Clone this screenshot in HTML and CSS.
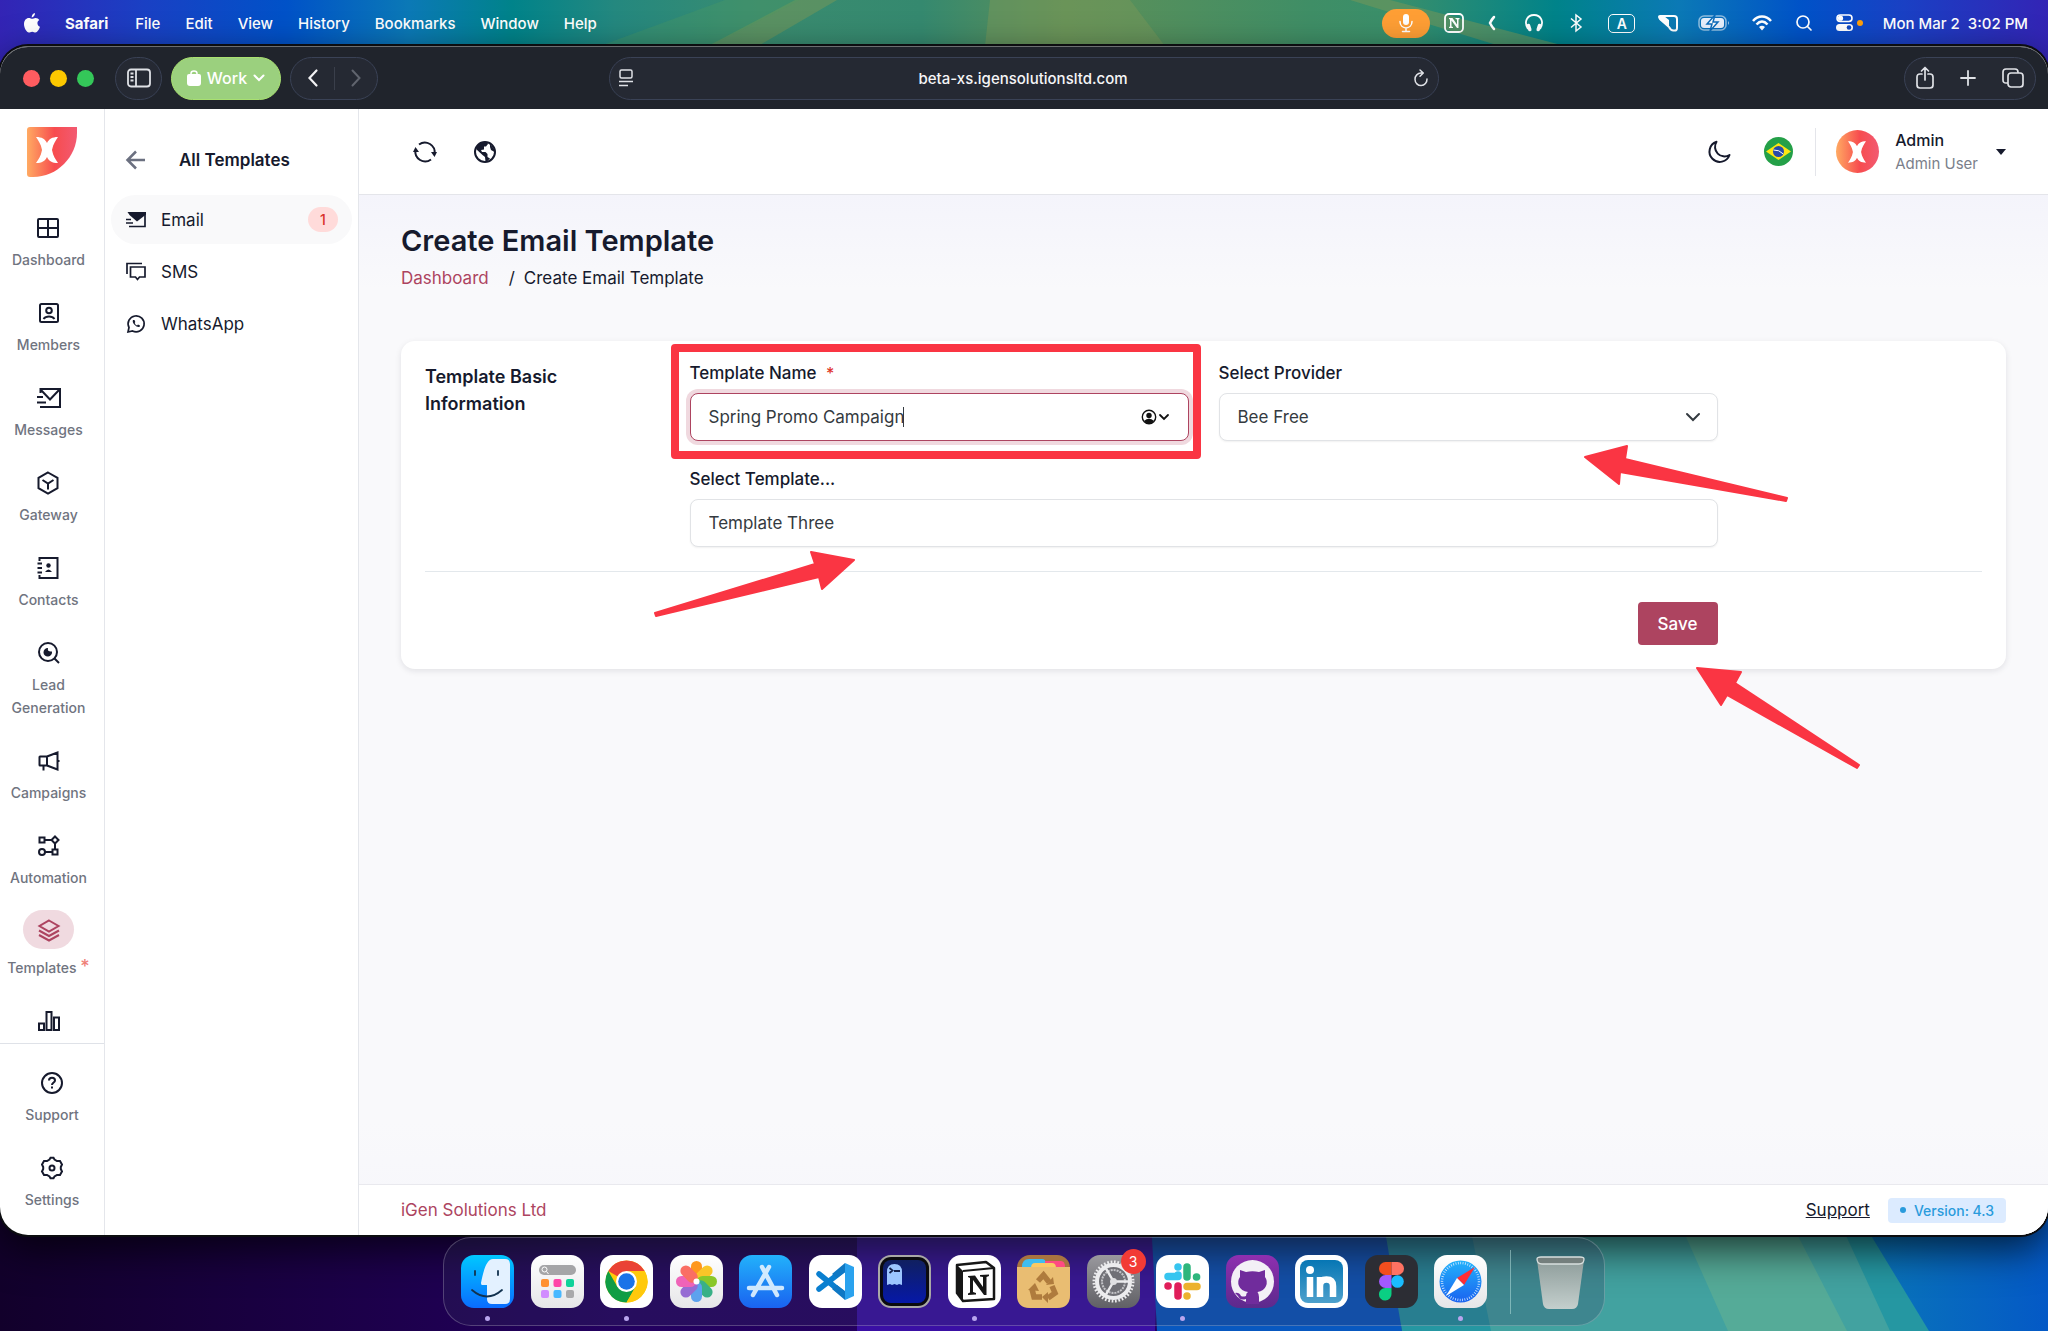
FILE: index.html
```html
<!DOCTYPE html>
<html lang="en">
<head>
    <meta charset="UTF-8">
    <meta name="viewport" content="width=device-width, initial-scale=1.0">
    <title>Create Email Template</title>
    <link rel="stylesheet" href="styles.css">
</head>
<body>
    <!-- shared gradients and the brand mark -->
    <svg class="defs" aria-hidden="true">
        <defs>
            <linearGradient id="brand" x1="0" y1="0" x2="1" y2="0">
                <stop offset="0" stop-color="#ffaa62"/>
                <stop offset=".55" stop-color="#f74c4f"/>
                <stop offset="1" stop-color="#f25a72"/>
            </linearGradient>
            <linearGradient id="silver" x1="0" y1="0" x2="0" y2="1">
                <stop offset="0" stop-color="#ffffff"/>
                <stop offset="1" stop-color="#e6e6e8"/>
            </linearGradient>
            <linearGradient id="night" x1="0" y1="0" x2="1" y2="0">
                <stop offset="0" stop-color="#12002b"/>
                <stop offset=".3" stop-color="#23005f"/>
                <stop offset=".6" stop-color="#250060"/>
                <stop offset="1" stop-color="#3a0ca0"/>
            </linearGradient>
            <linearGradient id="ocean" x1="0" y1="0" x2="1" y2="0">
                <stop offset="0" stop-color="#0a78b8"/>
                <stop offset="1" stop-color="#0459c6"/>
            </linearGradient>
            <symbol id="xmark" viewBox="0 0 22 26">
                <path d="M0 0C6 0 9 2 11 6C13 2 16 0 22 0C20 3 17 7 16 13C17 19 20 23 22 26C16 26 13 24 11 20C9 24 6 26 0 26C2 23 5 19 6 13C5 7 2 3 0 0Z" fill="#fff"/>
            </symbol>
        </defs>
    </svg>

    <svg class="wallpaper-top" viewBox="0 0 2048 90" preserveAspectRatio="none" aria-hidden="true">
        <g fill="#75975a" opacity=".55">
            <path d="M795 0H837L758 46H708Z"/>
            <path d="M990 0H1130L1165 46H985Z"/>
            <path d="M1350 0H1390L1565 46H1500Z"/>
        </g>
        <path d="M725 0H800L710 46H600Z" fill="#4f9a60" opacity=".3"/>
    </svg>
    <svg class="wallpaper-bottom" viewBox="0 0 2048 130" preserveAspectRatio="none" aria-hidden="true">
        <rect width="2048" height="130" fill="url(#night)"/>
        <path d="M857 0H1160L1155 130H857Z" fill="#3a0fa4"/>
        <path d="M1150 0H1390L1402 130H1157Z" fill="#0858c0"/>
        <path d="M1380 0H1860L1930 130H1402Z" fill="#2597a2"/>
        <path d="M1465 0H1830L1890 130H1491Z" fill="#42a2a0"/>
        <path d="M1670 0H1780L1847 130H1728Z" fill="#55ab98"/>
        <path d="M1850 0H2048V130H1929Z" fill="url(#ocean)"/>
    </svg>

    <header class="menubar">
        <nav class="menus">
            <svg class="apple" viewBox="0 0 16 20"><path fill="#fff" d="M11 0C11 2.500 9.500 4.300 7.700 4.500C7.500 2.300 9 .5 11 0ZM8.200 5.800C9 5.800 10 4.900 11.600 4.900C13.200 4.900 14.500 5.700 15.300 6.900C12.500 8.500 13 12.600 16 13.800C15.200 16.400 13.300 19.500 11.500 19.500C10.200 19.500 9.800 18.700 8.200 18.700C6.600 18.700 6.100 19.500 4.900 19.500C2.700 19.500 0 14.900 0 11C0 7.200 2.400 5 4.700 5C6.200 5 7.400 5.800 8.200 5.800Z"/></svg>
            <b>Safari</b><span>File</span><span>Edit</span><span>View</span><span>History</span><span>Bookmarks</span><span>Window</span><span>Help</span>
        </nav>
        <div class="status">
            <span class="mic"><svg width="16" height="20" viewBox="0 0 16 20" fill="none" stroke="#fff" stroke-width="1.500" stroke-linecap="round"><rect x="5" y="1" width="6" height="11" rx="3" fill="#fff" stroke="none"/><path d="M2 8.500C2 17 14 17 14 8.500M8 15V18.500M4.500 18.500H11.500"/></svg></span>
            <svg width="20" height="20" viewBox="0 0 20 20"><rect x="1" y="1" width="18" height="18" rx="4" fill="none" stroke="#fff" stroke-width="1.800"/><path d="M5 5H8.500L13 11.500V6.500L11.500 6V5H15.500V6L14.500 6.500V15H13L7.500 7.500V13.500L9 14V15H5V14L6 13.500V6.500L5 6Z" fill="#fff"/></svg>
            <svg width="16" height="20" viewBox="0 0 16 20" fill="none" stroke="#fff" stroke-width="2.500" stroke-linecap="round"><path d="M10 4Q8 6 6 10Q8 14 10 16"/></svg>
            <svg width="28" height="20" viewBox="0 0 28 20" fill="none" stroke="#fff" stroke-width="1.800"><path d="M8 16C3.500 9 7 2 14 2S24.500 9 20 16"/><path d="M8.500 12.500L9.800 16.500M19.500 12.500L18.200 16.500" stroke-width="3.500" stroke-linecap="round"/></svg>
            <svg width="16" height="20" viewBox="0 0 16 20" fill="none" stroke="#fff" stroke-width="1.500"><path d="M3 5.500L13 14L8 18V2L13 6L3 14.500"/></svg>
            <span class="input-source"><span>A</span></span>
            <svg width="16" height="20" viewBox="0 0 16 20"><path d="M0 3H14Q17 3 17 6V15Q17 18 14 17.500Q11 18 9 14L0 6Q-2 3 0 3Z" fill="none" stroke="#fff" stroke-width="2"/><path d="M-1 3H4L9 7V14L0 7Z" fill="#fff"/></svg>
            <svg width="36" height="20" viewBox="0 0 36 20"><rect x="3" y="3" width="27" height="14" rx="5" fill="none" stroke="#fff" stroke-opacity=".55" stroke-width="1.500"/><rect x="5" y="5" width="23" height="10" rx="3" fill="#e8f0fc"/><path d="M32 8Q34 10 32 12Z" fill="#fff" fill-opacity=".6"/><path d="M19 2L11 11H16L14 18L22 9H17Z" fill="#fff" stroke="#0b6cbc" stroke-width="1.500"/></svg>
            <svg width="20" height="20" viewBox="0 0 20 20" fill="none" stroke="#fff" stroke-width="2.500"><path d="M1 8C6 2 14 2 19 8M4.500 11.500C8 7.500 12 7.500 15.500 11.500"/><path d="M10 17.500L7 14Q10 11.500 13 14Z" fill="#fff" stroke="none"/></svg>
            <svg width="24" height="20" viewBox="0 0 24 20" fill="none" stroke="#fff" stroke-width="1.700" stroke-linecap="round"><circle cx="11" cy="9" r="6"/><path d="M15.500 13.500L19 17"/></svg>
            <svg width="27" height="20" viewBox="0 0 27 20"><rect x="1" y="2" width="15" height="6.500" rx="3.200" fill="none" stroke="#fff" stroke-width="1.600"/><circle cx="4.500" cy="5.200" r="2.600" fill="#fff"/><rect x="0" y="11" width="17" height="7" rx="3.500" fill="#fff"/><circle cx="13" cy="14.500" r="2.300" fill="#1048c0"/><circle cx="24" cy="10" r="3" fill="#ff9f0a"/></svg>
            <time>Mon Mar 2&nbsp; 3:02 PM</time>
        </div>
    </header>

    <div class="window">
        <div class="toolbar">
            <div class="toolbar-left">
                <div class="lights"><i class="close"></i><i class="minimize"></i><i class="zoom"></i></div>
                <button class="pill side-toggle" aria-label="Show sidebar"><svg width="24" height="20" viewBox="0 0 24 20" fill="none" stroke="#dfe1e6" stroke-width="1.800"><rect x="1" y="1.500" width="22" height="17" rx="3"/><path d="M9 1.500V18.500M3.500 5.500H6.500M3.500 9H6.500M3.500 12.500H6.500"/></svg></button>
                <button class="profile"><svg width="14" height="16" viewBox="0 0 14 16"><path d="M0 6Q0 4 2 4H12Q14 4 14 6V13Q14 16 11 16H3Q0 16 0 13Z" fill="#fff"/><path d="M4 5V3.500Q4 1 7 1T10 3.500V5" fill="none" stroke="#fff" stroke-width="1.500"/></svg>Work<svg width="12" height="8" viewBox="0 0 12 8" fill="none" stroke="#fff" stroke-width="2" stroke-linecap="round"><path d="M1.500 1.500L6 6L10.500 1.500"/></svg></button>
                <div class="pill history">
                    <button aria-label="Back"><svg width="10" height="18" viewBox="0 0 10 18" fill="none" stroke="#f2f2f4" stroke-width="2.200" stroke-linecap="round"><path d="M8.500 1.500L1.500 9L8.500 16.500"/></svg></button>
                    <i></i>
                    <button aria-label="Forward"><svg width="10" height="18" viewBox="0 0 10 18" fill="none" stroke="#60646e" stroke-width="2" stroke-linecap="round"><path d="M1.500 1.500L8.500 9L1.500 16.500"/></svg></button>
                </div>
            </div>
            <div class="pill address">
                <svg width="14" height="18" viewBox="0 0 14 18" fill="none" stroke="#dfe1e6" stroke-width="1.500"><rect x="1" y="1" width="12" height="8" rx="1.500"/><path d="M0 12.500H14M0 16.500H9"/></svg>
                <input type="text" value="beta-xs.igensolutionsltd.com" aria-label="Address">
                <svg width="16" height="18" viewBox="0 0 16 18" fill="none" stroke="#dfe1e6" stroke-width="1.500" stroke-linecap="round" stroke-linejoin="round"><path d="M9.500 4H8A6 6.300 0 1 0 14 10M7 1L10.300 4L7 7.200"/></svg>
            </div>
            <div class="pill actions">
                <svg width="18" height="24" viewBox="0 0 18 24" fill="none" stroke="#dfe1e6" stroke-width="1.700" stroke-linecap="round" stroke-linejoin="round"><path d="M6 8H4Q1 8 1 11V19Q1 22 4 22H14Q17 22 17 19V11Q17 8 14 8H12M9 14V1.500M5.500 5L9 1.500L12.500 5"/></svg>
                <svg width="16" height="24" viewBox="0 0 16 24" stroke="#dfe1e6" stroke-width="1.800" stroke-linecap="round"><path d="M1 12H15M8 5V19"/></svg>
                <svg width="22" height="24" viewBox="0 0 22 24" fill="none" stroke="#dfe1e6" stroke-width="1.700"><rect x="6" y="7" width="15" height="14" rx="3"/><path d="M6 17H4Q1 17 1 14V6Q1 3 4 3H13Q16 3 16 6V7"/></svg>
            </div>
        </div>

        <div class="app">
            <aside class="rail">
                <a class="logo" href="#" aria-label="Home"><svg width="50" height="50" viewBox="0 0 50 50"><path d="M3 0H50V6C50 30 30 50 6 50H3Q0 50 0 47V3Q0 0 3 0Z" fill="url(#brand)"/><use href="#xmark" x="9" y="10" width="22" height="26"/></svg></a>
                <nav class="rail-nav">
                    <a href="#"><svg viewBox="0 0 24 24"><rect x="2" y="3" width="20" height="18" rx="1"/><path d="M12 3V21M2 12H22"/></svg>Dashboard</a>
                    <a href="#"><svg viewBox="0 0 24 24"><rect x="3" y="3" width="18" height="18" rx="1.500"/><circle cx="12" cy="9.500" r="2.800"/><path d="M6.500 18C9 14.800 15 14.800 17.500 18"/></svg>Members</a>
                    <a href="#"><svg viewBox="0 0 24 24"><path d="M3.500 7V3H23V21H3M3.500 3.500L13 13.500L22.500 3.500M0 11H6M0 16.500H9"/></svg>Messages</a>
                    <a href="#"><svg viewBox="0 0 24 24"><path d="M12 1.500L21.500 6.800V17.200L12 22.500L2.500 17.200V6.800ZM6.500 9L12 12.500L17.500 9M12 12.500V18.500"/></svg>Gateway</a>
                    <a href="#"><svg viewBox="0 0 24 24"><path d="M3.500 5V2H21.500V22H3.500V19M1.500 7.500H6M1.500 12H6M1.500 16.500H6"/><circle cx="12.500" cy="9.500" r="2.200" class="solid"/><path class="solid" d="M9 16Q12.500 11 16 16Z"/></svg>Contacts</a>
                    <a href="#"><svg viewBox="0 0 24 24"><circle cx="11" cy="11" r="9"/><path d="M17 17L22 22"/><path class="solid" d="M11 7Q10 11 15 10.500A4.300 4.300 0 1 1 11 7Z"/></svg>Lead<br>Generation</a>
                    <a href="#"><svg viewBox="0 0 24 24"><path d="M3 7.500H10V16.500H3Q2.500 16.500 2.500 16V8Q2.500 7.500 3 7.500ZM10 7.500L20.500 3.500V20.500L10 16.500M6.500 16.500V21.500M20.500 12H22.500"/></svg>Campaigns</a>
                    <a href="#"><svg viewBox="0 0 24 24"><rect x="2.500" y="3.500" width="5" height="5"/><circle cx="5" cy="18" r="3"/><rect x="15.500" y="15.500" width="5" height="5"/><path d="M18 2.500L21.500 6L18 9.500L14.500 6ZM7.500 6H14.500M18 9.500V15.500M8 18H15.500"/></svg>Automation</a>
                    <a href="#" class="active"><span class="blob"><svg viewBox="0 0 24 24"><path d="M12 2.500L21.500 8L12 13.500L2.500 8ZM2 12.500L12 18L22 12.500M2 17L12 22.500L22 17"/></svg></span><span>Templates <sup>*</sup></span></a>
                    <a href="#" aria-label="Reports"><svg viewBox="0 0 24 24"><path d="M2 14.500H7V21H2ZM9.500 3H14.500V21H9.500ZM17 8.500H22V21H17Z"/></svg></a>
                </nav>
                <nav class="rail-foot">
                    <a href="#"><svg viewBox="0 0 24 24"><circle cx="12" cy="12" r="10"/><path d="M9 9.500C9 5.800 15 5.800 15 9.500C15 11.500 12 11.500 12 14M12 15.500V17.500"/></svg>Support</a>
                    <a href="#"><svg viewBox="0 0 24 24"><path d="M9.500 3.500L10.500 1.800H13.500L14.500 3.500L17 5H20L22 8.500L20.800 11V13L22 15.500L20 19H17L14.500 20.500L13.500 22.200H10.500L9.500 20.500L7 19H4L2 15.500L3.200 13V11L2 8.500L4 5H7Z"/><circle cx="12" cy="12" r="2.500"/></svg>Settings</a>
                </nav>
            </aside>

            <aside class="submenu">
                <div class="submenu-head">
                    <button aria-label="Back"><svg width="20" height="20" viewBox="0 0 20 20" fill="none" stroke="#6b7080" stroke-width="2.500"><path d="M19 10H2M10 1.500L1.500 10L10 18.500"/></svg></button>
                    <h2>All Templates</h2>
                </div>
                <nav>
                    <a href="#" class="current"><svg viewBox="0 0 20 20" fill="none" stroke="#161a2d" stroke-width="1.700"><path d="M19 4V16.500H3M0 9.500H5M0 13H7"/><path d="M1.500 2H20V4.500L11 11.500L3.500 5Z" fill="#161a2d" stroke="none"/></svg><span>Email</span><em>1</em></a>
                    <a href="#"><svg viewBox="0 0 20 20" fill="none" stroke="#161a2d" stroke-width="1.700"><path d="M1 12V1.500H16"/><path d="M4.500 5H19V15H13.500L11.500 17.500L9.500 15H4.500Z"/></svg><span>SMS</span></a>
                    <a href="#"><svg viewBox="0 0 20 20" fill="none" stroke="#161a2d" stroke-width="1.700"><path d="M2 18L3 13.500A8 8 0 1 1 6.500 17Z"/><path d="M7 6Q6 8 8.500 10.800T13.500 13L14 11.500L12 10.500L11 11.500Q9.500 11 8.700 9L9.300 8L8.500 6Z" fill="#161a2d" stroke="none"/></svg><span>WhatsApp</span></a>
                </nav>
            </aside>

            <main class="main">
                <header class="topbar">
                    <button aria-label="Refresh"><svg width="24" height="24" viewBox="0 0 24 24" fill="none" stroke="#161a2d" stroke-width="2"><path d="M6 4.500A9.800 9.800 0 0 1 21.500 14M18 19.500A9.800 9.800 0 0 1 2.500 10"/><path d="M18 12H24L21.500 17ZM0 12H6L2.500 7Z" fill="#161a2d" stroke="none"/></svg></button>
                    <button aria-label="Website"><svg width="24" height="24" viewBox="0 0 24 24"><circle cx="12" cy="12" r="10" fill="none" stroke="#161a2d" stroke-width="2"/><path d="M4 7Q7 1 14 2L15 4L13 6.500H11V9.500L8 10L9 12H12.500L14.500 14V17L17 18.500Q14 22 12.500 21.500L12 17L9.500 15L3 9ZM17 4L21.500 9.500V12L18 10L17 7Z" fill="#161a2d"/></svg></button>
                    <span class="spacer"></span>
                    <button aria-label="Dark mode"><svg width="24" height="24" viewBox="0 0 24 24" fill="none" stroke="#161a2d" stroke-width="2" stroke-linejoin="round"><path d="M9.500 1.800A10.300 10.300 0 1 0 22.500 15A9.500 9.500 0 0 1 9.500 1.800Z"/></svg></button>
                    <button class="flag" aria-label="Language"><svg width="29" height="29" viewBox="0 0 29 29"><circle cx="14.500" cy="14.500" r="14.500" fill="#24a048"/><path d="M14.500 6L27 14.500L14.500 23L2 14.500Z" fill="#fee611"/><circle cx="14.500" cy="14.500" r="5.500" fill="#2a4ba8"/><path d="M9.500 13Q15 12.500 19.300 17" stroke="#fff" fill="none"/></svg></button>
                    <button class="account">
                        <svg width="43" height="43" viewBox="0 0 43 43"><circle cx="21.500" cy="21.500" r="21.500" fill="url(#brand)"/><use href="#xmark" x="12" y="11" width="18" height="22"/></svg>
                        <span class="who"><b>Admin</b><small>Admin User</small></span>
                        <i class="caret-down"></i>
                    </button>
                </header>

                <div class="content">
                    <h1>Create Email Template</h1>
                    <p class="crumbs"><a href="#">Dashboard</a><i>/</i><span>Create Email Template</span></p>

                    <form class="card">
                        <div class="card-grid">
                            <h3>Template Basic Information</h3>
                            <div class="fields">
                                <div class="field marked">
                                    <label for="name">Template Name <sup>*</sup></label>
                                    <div class="control">
                                        <input type="text" id="name" class="focused" value="Spring Promo Campaign">
                                        <i class="cursor"></i>
                                        <svg class="autofill" width="28" height="16" viewBox="0 0 28 16" fill="none" stroke="#111"><circle cx="8" cy="8" r="6.700" stroke-width="1.400"/><circle cx="8" cy="6.500" r="2.700" fill="#111" stroke="none"/><path d="M3 12Q8 7.500 13 12Q8 17 3 12Z" fill="#111" stroke="none"/><path d="M19 6L23 10L27 6" stroke-width="1.800" stroke-linecap="round"/></svg>
                                    </div>
                                </div>
                                <div class="field">
                                    <label for="provider">Select Provider</label>
                                    <div class="control">
                                        <select id="provider"><option>Bee Free</option></select>
                                        <svg class="arrow" width="14" height="8" viewBox="0 0 14 8" fill="none" stroke="#343a40" stroke-width="2" stroke-linecap="round"><path d="M1 1L7 7L13 1"/></svg>
                                    </div>
                                </div>
                                <div class="field wide">
                                    <label for="template">Select Template...</label>
                                    <select id="template"><option>Template Three</option></select>
                                </div>
                            </div>
                        </div>
                        <hr>
                        <div class="card-grid">
                            <div class="buttons"><button type="button" class="save">Save</button></div>
                        </div>

                        <!-- pointer arrows over the form -->
                        <svg class="pointer to-template" width="204" height="68" viewBox="0 0 204 68"><path d="M201 10L158 2L162 14L2 63L3 66L166 27L169 39Z"/></svg>
                        <svg class="pointer to-provider" width="206" height="58" viewBox="0 0 206 58"><path d="M3 13L45 2L43 15L205 54L204 57L38 28L37 40Z"/></svg>
                        <svg class="pointer to-save" width="166" height="104" viewBox="0 0 166 104"><path d="M2 2L46 6L40 17L164 99L162 102L32 29L26 39Z"/></svg>
                    </form>
                </div>

                <footer class="footer">
                    <a href="#" class="company">iGen Solutions Ltd</a>
                    <span class="spacer"></span>
                    <a href="#" class="support">Support</a>
                    <span class="version"><i></i>Version: 4.3</span>
                </footer>
            </main>
        </div>
    </div>

    <div class="dock-area">
        <div class="dock">
            <div class="dock-apps">
                <span class="app-icon running"><svg viewBox="0 0 53 53"><defs><linearGradient id="finder" x2="0" y2="1"><stop stop-color="#00c8ff"/><stop offset="1" stop-color="#0a6cff"/></linearGradient></defs><rect width="53" height="53" rx="13" fill="url(#finder)"/><path d="M32 4H44Q49 4 49 9V44Q49 49 44 49H31Q26 49 26 44V30H21Q20 30 20 28C22 18 25 4 32 4Z" fill="#e3f1ff"/><path d="M14 16V20M37 16V20M11 35Q26 48 41 35" stroke="#12324f" stroke-width="1.800" fill="none" stroke-linecap="round"/></svg></span>
                <span class="app-icon"><svg viewBox="0 0 53 53"><rect width="53" height="53" rx="13" fill="url(#silver)"/><rect x="8" y="10" width="37" height="10" rx="5" fill="#a5a5a7"/><circle cx="13.500" cy="14.500" r="2.500" fill="none" stroke="#fff"/><path d="M15.500 16.500L17.500 19" stroke="#fff"/><rect x="10" y="24" width="8" height="8" rx="2" fill="#ff9030"/><rect x="22.500" y="24" width="8" height="8" rx="2" fill="#ff45a8"/><rect x="35" y="24" width="8" height="8" rx="2" fill="#10d29a"/><rect x="10" y="35" width="8" height="8" rx="2" fill="#d18cff"/><rect x="22.500" y="35" width="8" height="8" rx="2" fill="#48b8ff"/><rect x="35" y="35" width="8" height="8" rx="2" fill="#a9a9ab"/></svg></span>
                <span class="app-icon running"><svg viewBox="0 0 53 53"><rect width="53" height="53" rx="13" fill="#fff"/><circle cx="26.500" cy="26.500" r="21" fill="#ffcb0a"/><path d="M26.500 26.500L8.300 16A21 21 0 0 1 44.700 16Z" fill="#ea4335"/><path d="M8.300 16A21 21 0 0 0 26.500 47.500L35.600 31.800L17.400 31.800Z" fill="#0f9d45"/><path d="M26.500 16H44.700A21 21 0 0 1 26.500 47.500L35.600 31.800Z" fill="#ffc90c"/><circle cx="26.500" cy="26.500" r="10.500" fill="#fff"/><circle cx="26.500" cy="26.500" r="8.300" fill="#1a73e8"/></svg></span>
                <span class="app-icon"><svg viewBox="0 0 53 53"><rect width="53" height="53" rx="13" fill="url(#silver)"/><g opacity=".88"><rect x="21" y="6" width="11" height="20" rx="5.500" fill="#ff8a00"/><rect x="21" y="6" width="11" height="20" rx="5.500" fill="#fbbf0c" transform="rotate(45 26.500 26.500)"/><rect x="21" y="6" width="11" height="20" rx="5.500" fill="#7cc20e" transform="rotate(90 26.500 26.500)"/><rect x="21" y="6" width="11" height="20" rx="5.500" fill="#20a878" transform="rotate(135 26.500 26.500)"/><rect x="21" y="6" width="11" height="20" rx="5.500" fill="#4a98ee" transform="rotate(180 26.500 26.500)"/><rect x="21" y="6" width="11" height="20" rx="5.500" fill="#8b5bd0" transform="rotate(225 26.500 26.500)"/><rect x="21" y="6" width="11" height="20" rx="5.500" fill="#ef50b0" transform="rotate(270 26.500 26.500)"/><rect x="21" y="6" width="11" height="20" rx="5.500" fill="#fb5c50" transform="rotate(315 26.500 26.500)"/></g><circle cx="26.500" cy="26.500" r="3" fill="#fff"/></svg></span>
                <span class="app-icon"><svg viewBox="0 0 53 53"><defs><linearGradient id="store" x2="0" y2="1"><stop stop-color="#22b2fb"/><stop offset="1" stop-color="#1a62f0"/></linearGradient></defs><rect width="53" height="53" rx="13" fill="url(#store)"/><path d="M10 33H43M23 12L38 40M30 12L14 40" stroke="#e4f4ff" stroke-width="4.500" stroke-linecap="round" opacity=".9"/></svg></span>
                <span class="app-icon"><svg viewBox="0 0 53 53"><rect width="53" height="53" rx="13" fill="#fff"/><path d="M10 19L37 41M10 34L37 13" stroke="#0a7fd0" stroke-width="5.500" stroke-linecap="round"/><path d="M36 8L45 12V41L36 45Z" fill="#2aa2ee"/><path d="M36 8L23 19L28 23L36 17V36L28 30L23 34L36 45Z" fill="#0f78c4"/></svg></span>
                <span class="app-icon"><svg viewBox="0 0 53 53"><defs><linearGradient id="ghost" x2="0" y2="1"><stop stop-color="#102060"/><stop offset="1" stop-color="#0618a8"/></linearGradient></defs><rect width="53" height="53" rx="13" fill="#a9a8a6"/><rect x="2" y="2" width="49" height="49" rx="11" fill="#0b0b0e"/><rect x="5" y="5" width="43" height="43" rx="8" fill="url(#ghost)"/><path d="M9 30V17Q9 9 16.500 9T24 17V30L21 29L19 30L16.500 29L14 30L12 29Z" fill="#9cc6ff"/><path d="M11.500 13L14.500 15.500L11.500 18M16 16H22" stroke="#14204a" stroke-width="1.800" fill="none"/></svg></span>
                <span class="app-icon running"><svg viewBox="0 0 53 53"><rect width="53" height="53" rx="13" fill="#fff"/><path d="M9 10L38 7L46 13V44L15 46L9 38Z" fill="#fff" stroke="#161616" stroke-width="2.500" stroke-linejoin="round"/><path d="M9 10L15 16V46L9 38Z" fill="#161616"/><path d="M15 16L46 13" stroke="#161616" stroke-width="2"/><path d="M20 21L27 20.500L35 32V22L32 21.500V20L41 19.500V21L38.500 22V40H36L25 25V37L28 38V39.500L20 40V38.500L22 37.500V23L20 22Z" fill="#161616"/></svg></span>
                <span class="app-icon"><svg viewBox="0 0 53 53"><rect width="53" height="53" rx="13" fill="#a87440"/><path d="M5 12Q5 4 12 4H25Q29 4 29 9V15H5Z" fill="#3fbdf0"/><path d="M28 6H44Q48 6 48 12V16H28Z" fill="#ff4a82"/><path d="M14 13Q14 8 18 8H35Q39 8 39 13Z" fill="#fbc964"/><path d="M0 12H53V40Q53 53 40 53H13Q0 53 0 40Z" fill="#e9bd72"/><path d="M21 26L26.500 20L32 27M35 31L38 38L31 43M15 34L17 42H25" fill="none" stroke="#af7b3d" stroke-width="5.500"/><path d="M29 30L37 29L36 22ZM31 37V48L25 42ZM11 35L18 28L22 36Z" fill="#af7b3d"/></svg></span>
                <span class="app-icon"><svg viewBox="0 0 53 53"><defs><linearGradient id="gear" x2="0" y2="1"><stop stop-color="#9a999e"/><stop offset="1" stop-color="#606065"/></linearGradient></defs><rect width="53" height="53" rx="13" fill="url(#gear)"/><circle cx="26.500" cy="26.500" r="19.500" fill="none" stroke="#ececee" stroke-width="3" stroke-dasharray="1.700 1.700"/><circle cx="26.500" cy="26.500" r="16.500" fill="#707076" stroke="#ececee" stroke-width="4"/><circle cx="26.500" cy="26.500" r="11.500" fill="none" stroke="#c4c4c8" stroke-width="2" stroke-dasharray="2 1"/><path d="M27 26.500H42M26.500 26.500L19 13.500M26.500 26.500L19 39.500" stroke="#ececee" stroke-width="2.500"/><circle cx="26.500" cy="26.500" r="3.500" fill="#e0e0e2"/></svg><em class="count">3</em></span>
                <span class="app-icon running"><svg viewBox="0 0 53 53"><rect width="53" height="53" rx="13" fill="#fff"/><g stroke-width="7.500" stroke-linecap="round"><path d="M22 21V20M12 21.500H22" stroke="#36c5f0"/><path d="M22 12V12.100" stroke="#36c5f0"/><path d="M31 12V22M40.500 22H40.600" stroke="#2eb67d"/><path d="M31 31.500H41M31 41V41.100" stroke="#ecb22e"/><path d="M22 31V41M12 31H12.100" stroke="#e01e5a"/></g></svg></span>
                <span class="app-icon"><svg viewBox="0 0 53 53"><defs><linearGradient id="hub" x2="0" y2="1"><stop stop-color="#8f2fb0"/><stop offset="1" stop-color="#5c2a8c"/></linearGradient></defs><rect width="53" height="53" rx="13" fill="url(#hub)"/><circle cx="26.500" cy="26.500" r="21.500" fill="#f3f0f6"/><path d="M14 15L20 17Q26.500 15.500 33 17L39 15V22Q42 26 40 31Q38 36 31.500 37Q33 39 33 42V49H20V44Q14 46 12 41L9 38Q13 37 15 41Q17 42 20 41Q20 38 22 37Q15 36 13 31T14 22Z" fill="#702c9c"/></svg></span>
                <span class="app-icon"><svg viewBox="0 0 53 53"><defs><linearGradient id="link" x2="0" y2="1"><stop stop-color="#0676b4"/><stop offset="1" stop-color="#4da0cc"/></linearGradient></defs><rect width="53" height="53" rx="13" fill="#fff"/><rect x="5" y="5" width="43" height="43" rx="8" fill="url(#link)"/><circle cx="15" cy="15" r="4" fill="#fff"/><path d="M15 22V42M25 42V22M25 31Q25 24.500 31.500 24.500T38 31V42" stroke="#fff" stroke-width="6.500" fill="none"/></svg></span>
                <span class="app-icon"><svg viewBox="0 0 53 53"><rect width="53" height="53" rx="13" fill="#2c2d34"/><path d="M26.500 7H20.500A6.300 6.300 0 0 0 20.500 20H26.500Z" fill="#f24e1e"/><path d="M26.500 7H32.500A6.300 6.300 0 0 1 32.500 20H26.500Z" fill="#ff7262"/><path d="M26.500 20H20.500A6.300 6.300 0 0 0 20.500 33H26.500Z" fill="#a259ff"/><circle cx="32.500" cy="26.500" r="6.300" fill="#1abcfe"/><path d="M26.500 33H20.500A6.300 6.300 0 1 0 26.500 39Z" fill="#0acf83"/></svg></span>
                <span class="app-icon running"><svg viewBox="0 0 53 53"><rect width="53" height="53" rx="13" fill="url(#silver)"/><circle cx="26.500" cy="26.500" r="21" fill="url(#store)"/><circle cx="26.500" cy="26.500" r="18.500" fill="none" stroke="#cfe6ff" stroke-width="2.500" stroke-dasharray=".8 1.600"/><path d="M41 12L30 30L23 23Z" fill="#ff2d35"/><path d="M12 41L23 23L30 30Z" fill="#fff"/></svg></span>
            </div>
            <i class="divider"></i>
            <span class="app-icon"><svg viewBox="0 0 53 53"><defs><linearGradient id="bin" x2="0" y2="1"><stop stop-color="#8b9a98"/><stop offset="1" stop-color="#c4cfcd"/></linearGradient></defs><path d="M3 5Q26.500 0 50 5L44 49Q43 54 38 54H15Q10 54 9 49Z" fill="url(#bin)"/><path d="M3 4Q3 2 7 2H46Q50 2 50 4Q50 9 45 9H8Q3 9 3 4Z" fill="#747f7d" stroke="#d7dfde" stroke-width="1.300"/></svg></span>
        </div>
    </div>
</body>
</html>
```

FILE: styles.css
```css
* {
    box-sizing: border-box;
}
body {
    font-family: Inter, "Liberation Sans", sans-serif;
    font-size: 17px;
    color: #161a2d;
    margin: 0;
    height: 100vh;
    display: flex;
    flex-direction: column;
    position: relative;
    overflow: hidden;
    background: #12002b;
}
a {
    color: inherit;
    text-decoration: none;
}
button {
    font: inherit;
    color: inherit;
    background: none;
    border: none;
    padding: 0;
    cursor: pointer;
}
svg {
    display: block;
    flex: none;
    overflow: visible;
}
h1, h2, h3, p {
    margin: 0;
}
.defs {
    position: absolute;
    width: 0;
    height: 0;
}
.spacer {
    flex: 1;
}

/* desktop */
.wallpaper-top {
    position: absolute;
    top: 0;
    left: 0;
    width: 100%;
    height: 90px;
    background: linear-gradient(90deg, #3324b5, #1a40c4 7%, #0052c8 14%, #0b79b6 20%, #00838a 25%, #24887f 30%, #3a8c70 37%, #35896f 45%, #5e9058 52%, #3f8e66 64%, #3a8f6a 68%, #00838a 76%, #0b79b6 82%, #0052c8 88%, #1a40c4 93%, #3324b5);
}
.wallpaper-bottom {
    position: absolute;
    bottom: 0;
    left: 0;
    width: 100%;
    height: 130px;
}

/* menu bar */
.menubar {
    position: relative;
    display: flex;
    justify-content: space-between;
    align-items: center;
    height: 46px;
    padding: 0 20px 0 24px;
    color: #fff;
    font-weight: 500;
    font-size: 15px;
    white-space: nowrap;
}
.menus, .status {
    display: flex;
    align-items: center;
}
.menus {
    gap: 25px;
}
.menus b {
    margin-right: 2px;
}
.status {
    gap: 20px;
}
.apple {
    width: 16px;
    height: 20px;
}
.mic {
    width: 48px;
    height: 29px;
    border-radius: 15px;
    background: #ff9f35;
    display: flex;
    align-items: center;
    justify-content: center;
    margin-right: -6px;
}
.input-source {
    width: 36px;
    display: flex;
    justify-content: center;
}
.input-source span {
    width: 27px;
    height: 19px;
    line-height: 17px;
    border: 1px solid #fff;
    border-radius: 5px;
    text-align: center;
    font-size: 14px;
    font-weight: 600;
}

/* browser window */
.window {
    position: relative;
    flex: 1;
    min-height: 0;
    display: flex;
    flex-direction: column;
    border-radius: 28px;
    overflow: hidden;
    border-top: 1px solid #6b6e70;
    background: #fff;
    box-shadow: 0 0 0 2px #0c0d10, 0 14px 40px rgba(0, 0, 0, 0.7);
}
.toolbar {
    display: grid;
    grid-template-columns: 1fr 41% 1fr;
    align-items: center;
    height: 62px;
    padding: 0 12px;
    background: #20242c;
    font-size: 16px;
}
.toolbar-left {
    display: flex;
    align-items: center;
    padding-left: 11px;
}
.lights {
    display: flex;
    gap: 10px;
    margin-right: 21px;
}
.lights i {
    width: 17px;
    height: 17px;
    border-radius: 50%;
}
.close {
    background: #ff5c60;
}
.minimize {
    background: #fcc800;
}
.zoom {
    background: #34c759;
}
.pill {
    height: 43px;
    border: 1px solid #3a4256;
    border-radius: 22px;
    background: #252933;
    display: flex;
    align-items: center;
    justify-content: center;
}
.side-toggle {
    width: 47px;
}
.profile {
    height: 43px;
    width: 110px;
    margin: 0 9px;
    border-radius: 22px;
    background: #9bd07e;
    border: 1px solid #a9e070;
    color: #fff;
    font-weight: 500;
    display: flex;
    align-items: center;
    justify-content: center;
    gap: 6px;
}
.history {
    width: 88px;
    gap: 16px;
}
.history i {
    width: 1px;
    height: 23px;
    background: #3a3f4b;
}
.address {
    padding: 0 9px;
}
.address input {
    flex: 1;
    min-width: 0;
    border: none;
    outline: none;
    background: none;
    text-align: center;
    color: #f5f5f7;
    font: inherit;
    font-size: 15px;
    font-weight: 500;
}
.actions {
    justify-self: end;
    width: 132px;
    gap: 26px;
}

/* app shell */
.app {
    flex: 1;
    min-height: 0;
    display: flex;
}
.rail {
    width: 105px;
    border-right: 1px solid #e4e6eb;
    display: flex;
    flex-direction: column;
    flex: none;
}
.logo {
    padding: 18px 27px 39px;
}
.rail-nav, .rail-foot {
    display: flex;
    flex-direction: column;
    align-items: center;
    gap: 30px;
    font-size: 14px;
    font-weight: 500;
    line-height: 23px;
    color: #70747f;
    text-align: center;
}
.rail-nav {
    flex: 1;
    min-height: 0;
    overflow: hidden;
    width: 97px;
}
.rail-foot {
    border-top: 1px solid #dfe2e8;
    padding: 27px 0 24px;
}
.rail a:not(.logo) {
    display: flex;
    flex-direction: column;
    align-items: center;
    gap: 8px;
    flex: none;
}
.rail-nav svg, .rail-foot svg {
    width: 24px;
    height: 24px;
    fill: none;
    stroke: #161a2d;
    stroke-width: 2;
}
.rail .solid {
    fill: #161a2d;
    stroke: none;
}
.rail a.active {
    gap: 7px;
    margin-top: -9px;
    white-space: nowrap;
}
.blob {
    width: 51px;
    height: 39px;
    border-radius: 20px;
    background: #f0dae0;
    display: flex;
    align-items: center;
    justify-content: center;
}
.rail .blob svg {
    stroke: #ad4460;
}
.active sup {
    color: #ef8078;
    font-size: 18px;
    line-height: 1px;
    vertical-align: baseline;
}

.submenu {
    width: 254px;
    border-right: 1px solid #e4e6eb;
    padding: 34px 6px;
    flex: none;
}
.submenu-head {
    display: flex;
    align-items: center;
    gap: 33px;
    height: 34px;
    padding-left: 15px;
    margin-bottom: 18px;
}
.submenu h2 {
    font-size: 17px;
    font-weight: 600;
}
.submenu nav {
    display: flex;
    flex-direction: column;
    gap: 3px;
}
.submenu nav a {
    display: flex;
    align-items: center;
    gap: 15px;
    height: 49px;
    padding: 0 14px 0 15px;
    border-radius: 25px;
}
.submenu nav svg {
    width: 20px;
    height: 20px;
}
.submenu nav span {
    flex: 1;
}
.submenu .current {
    background: #f9f9fa;
}
.submenu em {
    width: 30px;
    line-height: 25px;
    border-radius: 13px;
    background: #ffdbda;
    color: #d9322c;
    text-align: center;
    font-style: normal;
    font-size: 14px;
    font-weight: 500;
}

.main {
    flex: 1;
    min-width: 0;
    display: flex;
    flex-direction: column;
    background: linear-gradient(#f4f4fb, #f4f4fb 86px, #f9f9fb 180px, #f9f9fb 90%, #f6f6fb);
}
.topbar {
    display: flex;
    align-items: center;
    height: 86px;
    padding: 0 42px 0 54px;
    border-bottom: 1px solid #e4e5ea;
    background: #fff;
}
.topbar > button:nth-child(2) {
    margin-left: 36px;
}
.flag {
    margin-left: 33px;
}
.account {
    display: flex;
    align-items: center;
    margin-left: 22px;
    padding-left: 20px;
    height: 48px;
    border-left: 1px solid #e4e5ea;
    text-align: left;
}
.who {
    margin: 0 18px 0 16px;
    font-size: 16px;
    line-height: 24px;
}
.who b, .who small {
    display: block;
}
.who b {
    font-weight: 500;
}
.who small {
    font-size: 15px;
    color: #7b7f8b;
}
.caret-down {
    border: 5px solid transparent;
    border-top: 6px solid #161a2d;
    border-bottom: none;
}

.content {
    flex: 1;
    padding: 27px 42px;
}
h1 {
    font-size: 29px;
    line-height: 38px;
    font-weight: 600;
}
.crumbs {
    display: flex;
    margin: 4px 0 49px;
    line-height: 28px;
}
.crumbs a {
    color: #ad4460;
}
.crumbs i {
    font-style: normal;
    margin: 0 9px 0 20px;
}
.card {
    position: relative;
    padding: 18px 24px 24px;
    border-radius: 14px;
    background: #fff;
    box-shadow: 0 2px 6px rgba(20, 20, 40, 0.1);
}
.card-grid {
    display: grid;
    grid-template-columns: repeat(12, 1fr);
    column-gap: 30px;
}
.card h3 {
    grid-column: 1 / 3;
    padding: 4px 60px 0 0;
    font-size: 18px;
    line-height: 27px;
    font-weight: 600;
}
.fields {
    grid-column: 3 / 11;
    display: grid;
    grid-template-columns: 1fr 1fr;
    gap: 24px 30px;
}
.wide {
    grid-column: 1 / 3;
}
.field {
    position: relative;
}
.field label {
    display: block;
    line-height: 28px;
    margin-bottom: 6px;
    font-weight: 500;
}
.field sup {
    color: #e0352b;
    margin-left: 5px;
    font-size: 16px;
    line-height: 1px;
    vertical-align: baseline;
}
.control {
    position: relative;
}
.field input, .field select {
    display: block;
    width: 100%;
    height: 48px;
    padding: 0 18px;
    appearance: none;
    border: 1px solid #e1e3e6;
    border-radius: 8px;
    background: #fff;
    box-shadow: 0 1px 2px rgba(0, 0, 0, 0.06);
    color: #343a40;
    font: inherit;
    outline: none;
}
.field .focused {
    border-color: #ad4460;
    box-shadow: 0 0 0 4px #f0d9df;
}
.marked::after {
    content: "";
    position: absolute;
    inset: -15px -12px -18px -19px;
    border: 8px solid #fa3543;
    border-radius: 4px;
    pointer-events: none;
}
.cursor {
    position: absolute;
    left: 213px;
    top: 14px;
    width: 1px;
    height: 20px;
    background: #343a40;
}
.autofill, .arrow {
    position: absolute;
    right: 20px;
    top: 16px;
    pointer-events: none;
}
.arrow {
    top: 20px;
    right: 18px;
}
.card hr {
    border: none;
    border-top: 1px solid #e3e8ec;
    margin: 24px 0 30px;
}
.buttons {
    grid-column: 3 / 11;
    text-align: right;
}
.save {
    width: 80px;
    height: 43px;
    border-radius: 4px;
    background: #ad4460;
    color: #fff;
    font-weight: 500;
}
.pointer {
    position: absolute;
    fill: #fa3543;
    stroke: #fa3543;
    stroke-width: 2;
    stroke-linejoin: round;
}
.to-template {
    left: 252px;
    top: 209px;
}
.to-provider {
    right: 218px;
    top: 103px;
}
.to-save {
    right: 145px;
    top: 325px;
}

.footer {
    display: flex;
    align-items: center;
    height: 51px;
    padding: 0 42px;
    border-top: 1px solid #e9e9ee;
    background: #fff;
}
.company {
    color: #ad4460;
}
.support {
    text-decoration: underline;
    margin-right: 18px;
}
.version {
    display: flex;
    align-items: center;
    gap: 8px;
    padding: 0 12px;
    line-height: 25px;
    border-radius: 4px;
    background: #dcebff;
    color: #2a9bdc;
    font-size: 14px;
    font-weight: 500;
}
.version i {
    width: 6px;
    height: 6px;
    border-radius: 50%;
    background: #2a9bdc;
}

/* dock */
.dock-area {
    position: relative;
    display: flex;
    justify-content: center;
    height: 96px;
    padding-top: 2px;
}
.dock {
    display: flex;
    align-items: center;
    gap: 23px;
    height: 89px;
    padding: 0 17px;
    border: 1px solid rgba(255, 255, 255, 0.22);
    border-radius: 28px;
    background: rgba(50, 50, 90, 0.25);
}
.dock-apps {
    display: flex;
    justify-content: space-between;
    width: 1026px;
}
.app-icon {
    position: relative;
    width: 53px;
    height: 53px;
}
.running::after {
    content: "";
    position: absolute;
    left: 24px;
    bottom: -13px;
    width: 5px;
    height: 5px;
    border-radius: 50%;
    background: #b9a5ee;
}
.count {
    position: absolute;
    top: -6px;
    right: -6px;
    width: 25px;
    line-height: 25px;
    border-radius: 50%;
    background: #f23b35;
    color: #fff;
    text-align: center;
    font-style: normal;
    font-size: 14px;
}
.divider {
    width: 1px;
    height: 64px;
    background: rgba(190, 230, 225, 0.5);
}
```
